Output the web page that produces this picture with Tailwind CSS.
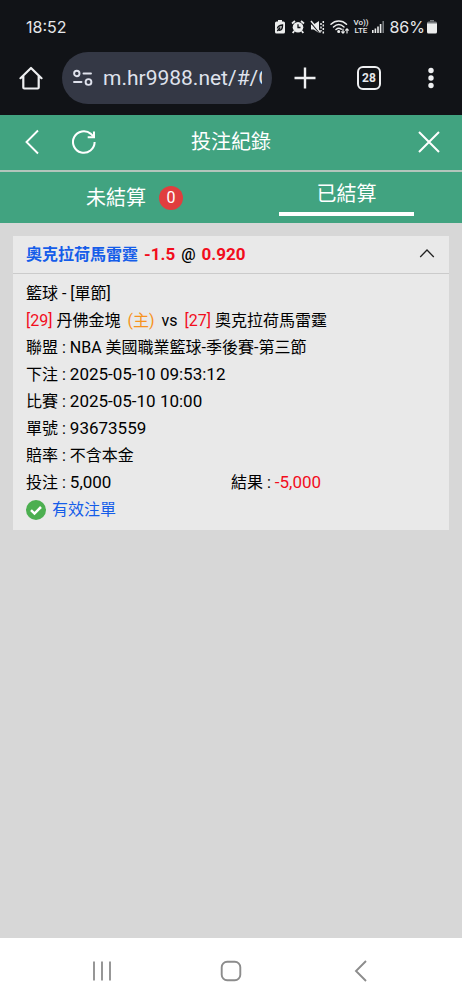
<!DOCTYPE html>
<html lang="zh-Hant">
<head>
<meta charset="utf-8">
<meta name="viewport" content="width=device-width, initial-scale=1">
<title>投注紀錄</title>
<script src="https://cdn.jsdelivr.net/npm/@tailwindcss/browser@4"></script>
</head>
<body class="flex min-h-screen flex-col bg-[#d7d7d7] font-[Roboto,'Noto_Sans_CJK_TC',sans-serif] text-base text-black">

<div class="bg-[#111317] text-[#e6e7ea]">
  <!-- Status bar -->
  <div class="flex h-[52px] items-center justify-between pt-[2px] pr-[25px] pl-[26px]">
    <span class="font-[Inter,sans-serif] text-base">18:52</span>
    <div class="flex items-center gap-[5px]">
      <svg class="h-4 w-3" viewBox="0 0 12 16" fill="none"><path d="M4 1h4v1.500h1.500a1.500 1.500 0 0 1 1.500 1.500v9a1.500 1.500 0 0 1-1.500 1.500h-7A1.500 1.500 0 0 1 1 13V4a1.500 1.500 0 0 1 1.500-1.500H4z" fill="#eceded"/><path d="M3.500 9.500C3.500 7 5 6.500 8.500 6c0 4-1 5.500-3.500 5.200M3.300 12l3-3.500" stroke="#111317" stroke-width="1.400"/></svg>
      <svg class="h-4 w-[14px]" viewBox="0 0 14 16" fill="none"><circle cx="7" cy="8.300" r="5.300" fill="#eceded"/><path d="M1 4.500l3-2.500M13 4.500L10 2M3.200 12l-1.500 2M10.800 12l1.500 2" stroke="#eceded" stroke-width="1.800"/><path d="M7 5.300v3.200h2.500" stroke="#111317" stroke-width="1.300"/></svg>
      <svg class="h-4 w-[15px]" viewBox="0 0 15 16" fill="none"><path d="M1 5.500h2.700L9 2v12l-5.300-3.500H1z" fill="#eceded"/><path d="M.2 3l10 11.500" stroke="#111317" stroke-width="1.300"/><path d="M1 2l9.500 11.500" stroke="#eceded" stroke-width="1.500"/><path d="M11 4v2M11 7.500v2M11 11v1.500M13.300 2v2M13.300 5.500v2M13.300 9v2M13.300 12.500v2" stroke="#eceded" stroke-width="1.500"/></svg>
      <svg class="h-4 w-[19px]" viewBox="0 0 19 16" fill="none" stroke="#eceded" stroke-width="1.500" stroke-linecap="round"><path d="M1 5.300c4.500-4.300 11-4.300 15.500 0M3.500 8c3.200-3 7.300-3 10.500 0M6 10.500c1.700-1.500 3.600-1.600 5.200-.3"/><circle cx="8.700" cy="12.500" r=".8" fill="#eceded"/><path d="M13 10v4M11.700 12.800l1.300 1.400 1.300-1.400M17 14v-4M15.700 11.200L17 9.800l1.300 1.400" stroke-width="1.200"/></svg>
      <div class="flex w-[13px] flex-col items-center font-[Roboto,sans-serif] text-[8px] leading-[8px] font-medium"><span>Vo))</span><span>LTE</span></div>
      <svg class="h-4 w-3" viewBox="0 0 12 16" fill="#eceded"><path d="M0 11h1.600v3H0zM2.600 9.500h1.600V14H2.600zM5.200 7.500h1.600V14H5.200zM7.800 5h1.600v9H7.800z"/><path d="M10.400 2H12v12h-1.600z" fill="#777a7e"/></svg>
      <div class="flex items-center gap-[2px]"><span class="font-[Inter,sans-serif] text-base">86%</span>
      <svg class="h-4 w-[10px]" viewBox="0 0 10 16"><path d="M3 1h4v1.500H3z" fill="#777a7e"/><path d="M1.500 2.500h7Q10 2.500 10 4v1H0V4q0-1.500 1.500-1.500" fill="#777a7e"/><path d="M0 4.500h10v8.500q0 1.500-1.500 1.500h-7Q0 14.500 0 13z" fill="#eceded"/></svg></div>
    </div>
  </div>

  <!-- Browser toolbar -->
  <div class="flex h-[63px] items-start pr-[19px] pl-[19px]">
    <button class="mr-[19px] flex h-[52px] w-6 items-center justify-center" aria-label="首頁">
      <svg class="size-6" viewBox="0 0 24 24" fill="none" stroke="#eeeff1" stroke-width="2.200" stroke-linejoin="round" stroke-linecap="round"><path d="M1.500 12.200L12 2l10.500 10.200M4.300 10V21.500q0 1 1 1h13.400q1 0 1-1V10"/></svg>
    </button>
    <div class="flex h-[52px] min-w-0 flex-1 items-center gap-[10px] rounded-full bg-[#343845] pr-[10px] pl-[11px]">
      <svg class="h-5 w-5 shrink-0" viewBox="0 0 20 20" fill="none" stroke="#dfe2ec" stroke-width="1.900" stroke-linecap="round"><circle cx="3.800" cy="5.500" r="2.700"/><path d="M10.500 5.500H18M1 14h7.500"/><circle cx="15.500" cy="14" r="2.900"/></svg>
      <input class="w-full min-w-0 bg-transparent pt-[2px] font-[Roboto,sans-serif] text-[21px] text-[#dfe2ec] outline-none" type="text" aria-label="網址" value="m.hr9988.net/#/C">
    </div>
    <button class="ml-[21px] flex h-[52px] w-6 items-center justify-center" aria-label="新增分頁">
      <svg class="size-6" viewBox="0 0 24 24" stroke="#eeeff1" stroke-width="2.400"><path d="M1.500 12h21M12 1.500v21"/></svg>
    </button>
    <button class="ml-10 flex h-[52px] w-6 items-center justify-center" aria-label="分頁"><span class="flex size-6 items-center justify-center rounded-md border-2 border-[#eeeff1] font-[Roboto,sans-serif] text-xs font-bold">28</span></button>
    <button class="ml-[38px] flex h-[52px] w-6 items-center justify-center" aria-label="更多">
      <svg class="size-6" viewBox="0 0 24 24" fill="#eeeff1"><circle cx="12" cy="4.500" r="2.700"/><circle cx="12" cy="12" r="2.700"/><circle cx="12" cy="19.500" r="2.700"/></svg>
    </button>
  </div>
</div>

<!-- Page header -->
<header class="grid h-[57px] grid-cols-[1fr_auto_1fr] items-center border-b-2 border-[#b3c5bc] bg-[#41a380] px-5 pb-[2px] text-white">
  <div class="flex items-center gap-[26px]">
    <button aria-label="返回"><svg class="size-[26px]" viewBox="0 0 26 26" fill="none" stroke="currentColor" stroke-width="1.900"><path d="M18 1.500L6.500 13 18 24.500"/></svg></button>
    <button aria-label="重新整理"><svg class="size-6" viewBox="0 0 26 26" fill="none" stroke="currentColor" stroke-width="2.200"><path d="M24.500 13A11.700 11.700 0 1 1 20.500 4.200l2.500 2.600"/><path d="M23.800 1.500v6.300h-6.800"/></svg></button>
  </div>
  <h1 class="text-xl">投注紀錄</h1>
  <button class="justify-self-end" aria-label="關閉"><svg class="size-[26px]" viewBox="0 0 26 26" stroke="currentColor" stroke-width="2"><path d="M3 3l20 20M23 3L3 23"/></svg></button>
</header>

<nav class="grid h-[51px] grid-cols-2 bg-[#41a380] text-xl text-white">
  <button class="flex items-center justify-center gap-[13px] pl-[38px]">未結算<span class="flex size-6 items-center justify-center rounded-full bg-[#e03e3e] text-base">0</span></button>
  <button class="flex flex-col items-center"><span class="flex w-[135px] justify-center border-b-4 border-white pt-1 leading-[36px]">已結算</span></button>
</nav>

<main class="flex-1 p-[13px]">
  <article class="bg-[#e9e9e9]">
    <button class="flex h-[38px] w-full items-center justify-between border-b border-[#cbcbcb] px-[13px] text-left font-bold">
      <span class="flex items-baseline gap-[6px]"><span class="text-[#155de9]">奧克拉荷馬雷霆</span><span class="text-[17px] text-[#f20d1c]">-1.5</span><span class="font-medium">@</span><span class="text-[17px] text-[#f20d1c]">0.920</span></span>
      <svg class="mr-[1px] h-4 w-4" viewBox="0 0 16 16" fill="none" stroke="#222" stroke-width="1.300"><path d="M1.200 10L8 3l6.800 7"/></svg>
    </button>
    <div class="px-[13px] pt-[6px] pb-[7px] leading-[27px]">
      <p>籃球 - [單節]</p>
      <p class="flex gap-[7px]"><span><span class="text-[#f20d1c]">[29]</span> 丹佛金塊</span><span class="text-[#f7931e]">(主)</span><span>vs</span><span><span class="text-[#f20d1c]">[27]</span> 奧克拉荷馬雷霆</span></p>
      <p>聯盟 : NBA 美國職業籃球-季後賽-第三節</p>
      <p>下注 : <span class="text-[17px]">2025-05-10 09:53:12</span></p>
      <p>比賽 : <span class="text-[17px]">2025-05-10 10:00</span></p>
      <p>單號 : <span class="text-[17px]">93673559</span></p>
      <p>賠率 : 不含本金</p>
      <p class="grid grid-cols-2"><span>投注 : <span class="text-[17px]">5,000</span></span><span>結果 : <span class="text-[17px] text-[#f20d1c]">-5,000</span></span></p>
      <p class="flex items-center gap-[6px] text-[#155de9]"><svg class="size-5" viewBox="0 0 20 20" fill="none"><circle cx="10" cy="10" r="10" fill="#4caf50"/><path d="M5 10.200l3.500 3.400L15 7" stroke="#fff" stroke-width="2.500"/></svg>有效注單</p>
    </div>
  </article>
</main>

<!-- System navigation -->
<footer class="flex h-[62px] items-center justify-between bg-white px-[89px] pt-1">
  <button aria-label="最近"><svg class="size-[26px]" viewBox="0 0 26 26" stroke="#8c8c8c" stroke-width="1.800"><path d="M5 3.500v19M13 3.500v19M21 3.500v19"/></svg></button>
  <button aria-label="主畫面"><svg class="size-[26px]" viewBox="0 0 26 26" fill="none" stroke="#8c8c8c" stroke-width="1.900"><rect x="3.700" y="3.700" width="18.600" height="18.600" rx="5.500"/></svg></button>
  <button aria-label="返回上頁"><svg class="size-[26px]" viewBox="0 0 26 26" fill="none" stroke="#8c8c8c" stroke-width="1.900"><path d="M19 3L9 13l10 10"/></svg></button>
</footer>
</body>
</html>
